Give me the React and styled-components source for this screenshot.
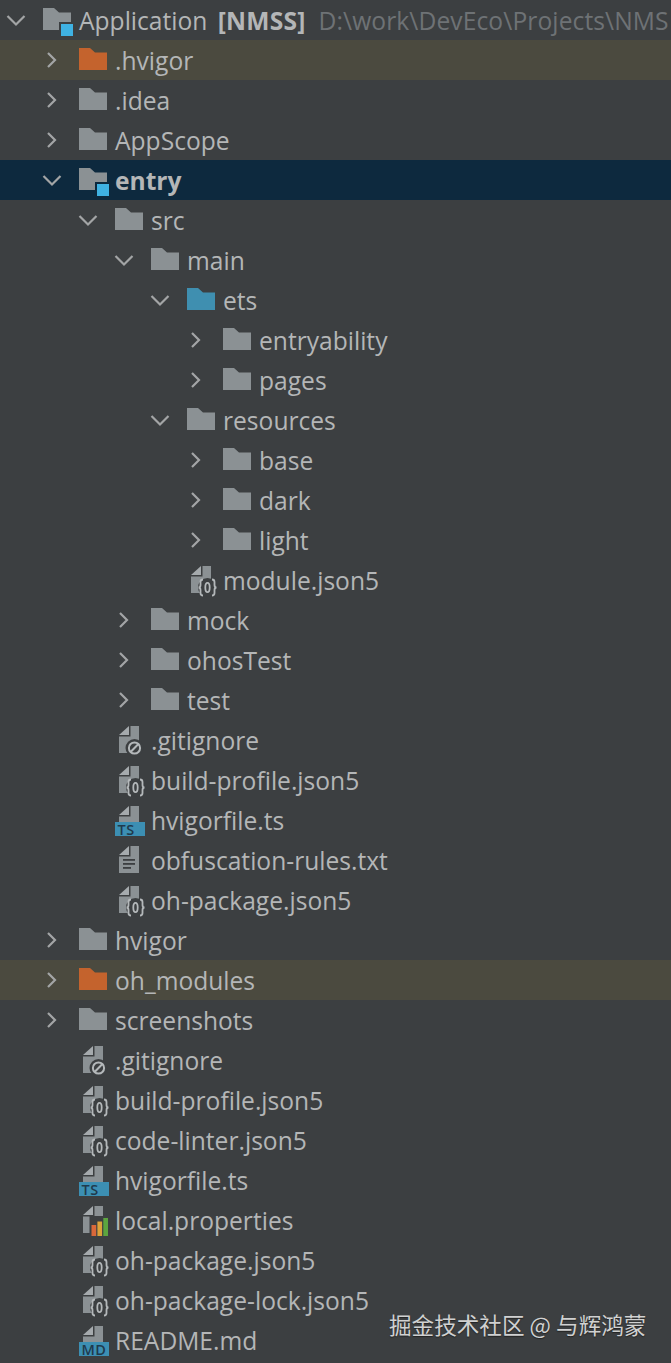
import React from "react";
import styled, { createGlobalStyle } from "styled-components";

const Global = createGlobalStyle`
  html, body { margin: 0; padding: 0; background: #3c3f41; }
  body { width: 671px; height: 1363px; overflow: hidden; }
`;

const Tree = styled.div`
  position: relative;
  width: 671px;
  height: 1363px;
  overflow: hidden;
  background: #3c3f41;
  font-family: "Open Sans", "Noto Sans", sans-serif;
  font-size: 24.6px;
  color: #b4b6b7;
`;

const rowBackgrounds = { ignored: "#4b4a3f", selected: "#0d293e" };

const Row = styled.div`
  display: grid;
  grid-template-columns: 43px 36px 1fr;
  align-items: center;
  height: 40px;
  padding-left: ${(p) => p.$depth * 36}px;
  background: ${(p) => rowBackgrounds[p.$tone] || "transparent"};
  white-space: nowrap;
  overflow: hidden;
`;

const Toggle = styled.svg`
  display: block;
  width: 20px;
  height: 20px;
  margin-left: 6px;
  fill: none;
  stroke: #a3a5a6;
  stroke-width: 2.2;
`;

const Glyph = styled.svg`
  display: block;
  width: 36px;
  height: 40px;
  overflow: visible;
`;

const Label = styled.span`
  line-height: 42px;
  height: 40px;
  font-weight: ${(p) => (p.$bold ? 700 : 400)};
`;

const Strong = styled.span`
  margin-left: 4px;
  font-weight: 700;
  letter-spacing: 0.2px;
`;

const Path = styled.span`
  margin-left: 13px;
  color: #6e7275;
  letter-spacing: 0.1px;
`;

const Watermark = styled.div`
  position: absolute;
  left: 389px;
  top: 1310px;
  font-family: "Noto Sans CJK SC", sans-serif;
  font-size: 22.6px;
  line-height: 30px;
  color: #d0d1d1;
  text-shadow: 0 1px 1px #222;
`;

const GREY = "#8b9194";
const BG = "#3c3f41";

function Chevron({ open }) {
  return (
    <Toggle viewBox="0 0 20 20">
      <path d={open ? "M1.5 6 L10 14.5 L18.5 6" : "M6 3 L13 10 L6 17"} />
    </Toggle>
  );
}

function Folder({ color = GREY, module, bg = BG }) {
  return (
    <Glyph viewBox="0 0 36 40">
      <path d="M0 8 H11 L16 12.5 H28 V30 H0 Z" fill={color} />
      {module && (
        <>
          <rect x="16" y="22" width="15" height="15" fill={bg} />
          <rect x="18" y="24" width="12" height="12" fill="#3fb2e3" />
        </>
      )}
    </Glyph>
  );
}

function Sheet({ short }) {
  const bottom = short ? 22 : 33;
  return (
    <>
      <path d="M4 15 L14 6 V15 Z" fill="#a5aaad" />
      <path d={`M15.5 6 H24 V${bottom} H4 V16.5 H15.5 Z`} fill={GREY} />
    </>
  );
}

function FileIcon({ kind }) {
  return (
    <Glyph viewBox="0 0 36 40">
      {kind === "json" && (
        <>
          <Sheet />
          <circle cx="20.5" cy="27.5" r="9.5" fill={BG} />
          <g fill="none" stroke="#b4b8ba" strokeWidth="1.8">
            <path d="M16 19.5 Q13.5 19.5 13.5 22 V25 Q13.5 27.5 11.5 27.5 Q13.5 27.5 13.5 30 V33 Q13.5 35.5 16 35.5" />
            <path d="M25 19.5 Q27.5 19.5 27.5 22 V25 Q27.5 27.5 29.5 27.5 Q27.5 27.5 27.5 30 V33 Q27.5 35.5 25 35.5" />
            <ellipse cx="20.5" cy="27.5" rx="2.2" ry="4.6" />
          </g>
        </>
      )}
      {kind === "ignore" && (
        <>
          <Sheet />
          <circle cx="19.5" cy="28" r="9" fill={BG} />
          <g fill="none" stroke="#b4b8ba" strokeWidth="2">
            <circle cx="19.5" cy="28" r="5.6" />
            <path d="M15.6 32 L23.4 24" />
          </g>
        </>
      )}
      {(kind === "ts" || kind === "md") && (
        <>
          <Sheet short />
          <rect x="0" y="22" width="30" height="14" fill="#3c8fb3" />
          <text
            x="2.5"
            y="34.6"
            fontFamily="Open Sans, sans-serif"
            fontSize="14.5"
            fontWeight="600"
            letterSpacing="0.5"
            fill="#1f3a4d"
          >
            {kind === "ts" ? "TS" : "MD"}
          </text>
        </>
      )}
      {kind === "text" && (
        <>
          <Sheet />
          <g fill="#3c3f41">
            <rect x="8" y="19" width="12" height="1.8" />
            <rect x="8" y="23" width="12" height="1.8" />
            <rect x="8" y="27" width="8" height="1.8" />
          </g>
        </>
      )}
      {kind === "props" && (
        <>
          <Sheet />
          <rect x="10.5" y="16" width="20" height="22" fill={BG} />
          <rect x="12.5" y="25" width="4.7" height="11" fill="#d9683a" />
          <rect x="18.4" y="21.5" width="4.7" height="14.5" fill="#dca23a" />
          <rect x="24.3" y="18" width="4.7" height="18" fill="#5ca53f" />
        </>
      )}
    </Glyph>
  );
}

const rows = [
  { d: 0, t: "module", open: true, root: true },
  { d: 1, t: "orange", closed: true, name: ".hvigor", tone: "ignored" },
  { d: 1, t: "folder", closed: true, name: ".idea" },
  { d: 1, t: "folder", closed: true, name: "AppScope" },
  { d: 1, t: "module", open: true, name: "entry", bold: true, tone: "selected" },
  { d: 2, t: "folder", open: true, name: "src" },
  { d: 3, t: "folder", open: true, name: "main" },
  { d: 4, t: "source", open: true, name: "ets" },
  { d: 5, t: "folder", closed: true, name: "entryability" },
  { d: 5, t: "folder", closed: true, name: "pages" },
  { d: 4, t: "folder", open: true, name: "resources" },
  { d: 5, t: "folder", closed: true, name: "base" },
  { d: 5, t: "folder", closed: true, name: "dark" },
  { d: 5, t: "folder", closed: true, name: "light" },
  { d: 4, t: "json", name: "module.json5" },
  { d: 3, t: "folder", closed: true, name: "mock" },
  { d: 3, t: "folder", closed: true, name: "ohosTest" },
  { d: 3, t: "folder", closed: true, name: "test" },
  { d: 2, t: "ignore", name: ".gitignore" },
  { d: 2, t: "json", name: "build-profile.json5" },
  { d: 2, t: "ts", name: "hvigorfile.ts" },
  { d: 2, t: "text", name: "obfuscation-rules.txt" },
  { d: 2, t: "json", name: "oh-package.json5" },
  { d: 1, t: "folder", closed: true, name: "hvigor" },
  { d: 1, t: "orange", closed: true, name: "oh_modules", tone: "ignored" },
  { d: 1, t: "folder", closed: true, name: "screenshots" },
  { d: 1, t: "ignore", name: ".gitignore" },
  { d: 1, t: "json", name: "build-profile.json5" },
  { d: 1, t: "json", name: "code-linter.json5" },
  { d: 1, t: "ts", name: "hvigorfile.ts" },
  { d: 1, t: "props", name: "local.properties" },
  { d: 1, t: "json", name: "oh-package.json5" },
  { d: 1, t: "json", name: "oh-package-lock.json5" },
  { d: 1, t: "md", name: "README.md" },
];

function RowIcon({ row }) {
  if (row.t === "folder") return <Folder />;
  if (row.t === "orange") return <Folder color="#c4632d" />;
  if (row.t === "source") return <Folder color="#3f8fb0" />;
  if (row.t === "module")
    return <Folder module bg={row.tone === "selected" ? "#0d293e" : BG} />;
  return <FileIcon kind={row.t} />;
}

export default function App() {
  return (
    <Tree>
      <Global />
      {rows.map((row, i) => (
        <Row key={i} $depth={row.d} $tone={row.tone}>
          {row.open || row.closed ? <Chevron open={row.open} /> : <span />}
          <RowIcon row={row} />
          {row.root ? (
            <Label>
              Application <Strong>[NMSS]</Strong>
              <Path>D:\work\DevEco\Projects\NMS</Path>
            </Label>
          ) : (
            <Label $bold={row.bold}>{row.name}</Label>
          )}
        </Row>
      ))}
      <Watermark>掘金技术社区 @ 与辉鸿蒙</Watermark>
    </Tree>
  );
}
